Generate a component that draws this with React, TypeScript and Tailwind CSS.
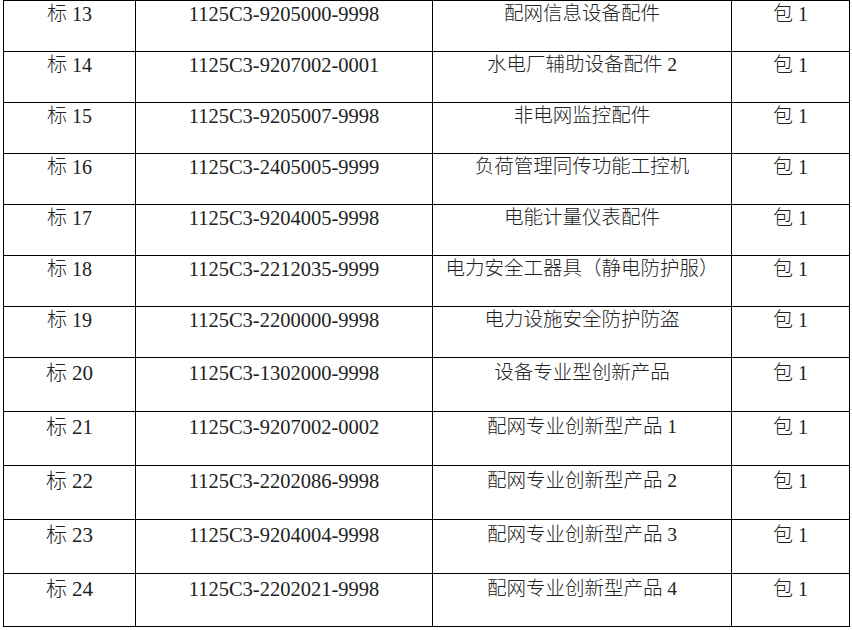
import React from "react";

const rows: [string, string, string, string][] = [
  ["标 13", "1125C3-9205000-9998", "配网信息设备配件", "包 1"],
  ["标 14", "1125C3-9207002-0001", "水电厂辅助设备配件 2", "包 1"],
  ["标 15", "1125C3-9205007-9998", "非电网监控配件", "包 1"],
  ["标 16", "1125C3-2405005-9999", "负荷管理同传功能工控机", "包 1"],
  ["标 17", "1125C3-9204005-9998", "电能计量仪表配件", "包 1"],
  ["标 18", "1125C3-2212035-9999", "电力安全工器具（静电防护服）", "包 1"],
  ["标 19", "1125C3-2200000-9998", "电力设施安全防护防盗", "包 1"],
  ["标 20", "1125C3-1302000-9998", "设备专业型创新产品", "包 1"],
  ["标 21", "1125C3-9207002-0002", "配网专业创新型产品 1", "包 1"],
  ["标 22", "1125C3-2202086-9998", "配网专业创新型产品 2", "包 1"],
  ["标 23", "1125C3-9204004-9998", "配网专业创新型产品 3", "包 1"],
  ["标 24", "1125C3-2202021-9998", "配网专业创新型产品 4", "包 1"],
];

const heights = [51, 51, 51, 51, 51, 51, 51, 54, 54, 54, 54, 53];

export default function App() {
  return (
    <div
      className="w-[852px] h-[630px] bg-white overflow-hidden text-[#222] font-light"
      style={{ fontFamily: '"Liberation Serif", "Noto Sans CJK SC", serif' }}
    >
      <table className="ml-[3px] border-collapse table-fixed w-[846px]">
        <colgroup>
          <col className="w-[132px]" />
          <col className="w-[297px]" />
          <col className="w-[299px]" />
          <col className="w-[118px]" />
        </colgroup>
        <tbody>
          {rows.map((r, i) => {
            const big = i >= 7;
            return (
              <tr key={i} style={{ height: heights[i] }}>
                <td
                  className={`border border-black text-center align-top p-0 leading-[26px] ${
                    big ? "text-[21px] pt-[2px]" : "text-[20px] pt-0"
                  }`}
                >
                  {r[0]}
                </td>
                <td
                  className={`border border-black text-center align-top p-0 text-[20.5px] leading-[26px] ${
                    big ? "pt-[2px]" : "pt-0"
                  }`}
                >
                  {r[1]}
                </td>
                <td
                  className={`border border-black text-center align-top p-0 text-[19.5px] leading-[26px] ${
                    big ? "pt-[2px]" : "pt-0"
                  }`}
                >
                  {r[2]}
                </td>
                <td
                  className={`border border-black text-center align-top p-0 text-[20px] leading-[26px] ${
                    big ? "pt-[2px]" : "pt-0"
                  }`}
                >
                  {r[3]}
                </td>
              </tr>
            );
          })}
        </tbody>
      </table>
    </div>
  );
}
